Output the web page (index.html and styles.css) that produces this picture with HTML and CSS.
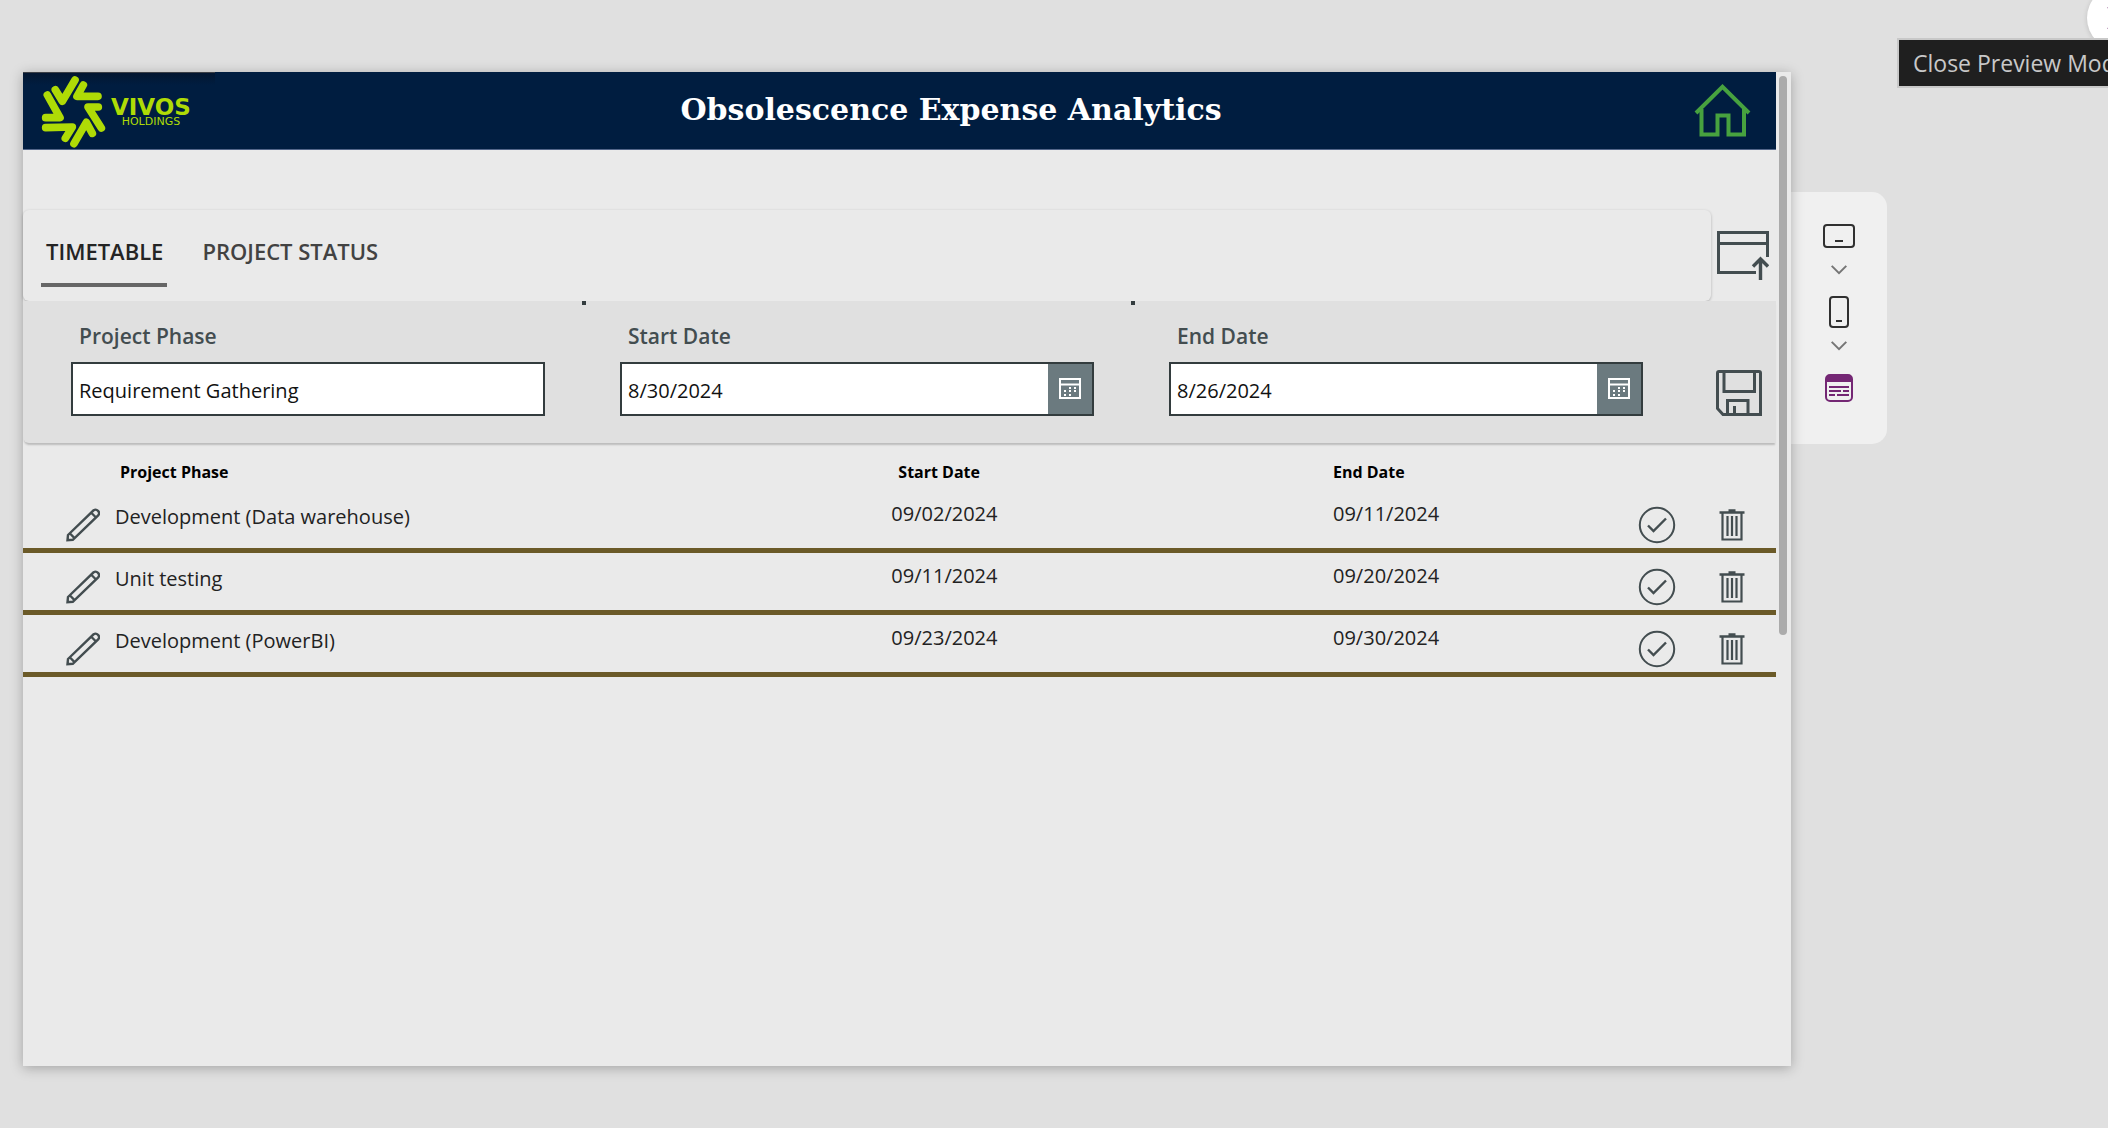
FILE: index.html
```html
<!DOCTYPE html>
<html lang="en">
<head>
<meta charset="utf-8">
<title>Obsolescence Expense Analytics</title>
<link rel="stylesheet" href="styles.css">
</head>
<body>
<svg class="sprite" aria-hidden="true">
  <symbol id="pencil" viewBox="0 0 34 34"><path d="M2 27 L27.600 2.300 A3.500 3.500 0 0 1 32.400 7.200 L6.800 31.800 L1.500 32.200 Z M4.500 26 L8.300 29.800 M25.500 5 L29.500 9" fill="none" stroke="currentColor" stroke-width="2.400"/></symbol>
  <symbol id="check" viewBox="0 0 38 38"><circle cx="19" cy="19" r="17.200" fill="none" stroke="currentColor" stroke-width="2"/><path d="M10 19.500 L15.500 25 L28 12.500" fill="none" stroke="currentColor" stroke-width="2.400"/></symbol>
  <symbol id="trash" viewBox="0 0 26 34"><path d="M.5 4.500 H25.500 M9.500 2.500 H16.500" fill="none" stroke="currentColor" stroke-width="2.600"/><path d="M3.500 5 V31.500 H22.500 V5" fill="none" stroke="currentColor" stroke-width="2.200"/><path d="M8.500 8 V28 M13 8 V28 M17.500 8 V28" stroke="currentColor" stroke-width="2.200"/></symbol>
  <symbol id="calendar" viewBox="0 0 22 22"><path d="M1 1 H21 V20 H1 Z M1 6.500 H21" fill="none" stroke="currentColor" stroke-width="2"/><path d="M10 9h2v2h-2z M15 9h2v2h-2z M5 12h2v2h-2z M10 12h2v2h-2z M15 12h2v2h-2z M5 16h2v2h-2z M10 16h2v2h-2z" fill="currentColor"/></symbol>
  <symbol id="chevron" viewBox="0 0 16 10"><path d="M.7 .9 L8 8.200 L15.300 .9" fill="none" stroke="currentColor" stroke-width="2"/></symbol>
</svg>
<div class="stage">
  <main class="app">
    <div class="screen">
      <header class="banner">
        <div class="logo">
          <svg class="logo-mark" viewBox="90 45 201 225" aria-hidden="true"><g fill="none" stroke="#afdb06" stroke-width="23" stroke-linecap="round" stroke-linejoin="round"><path d="M136 92 L157 127 L195 63"/><path d="M220 78 L201 112 H264"/><path d="M112 108 L150 176 H107"/><path d="M107 206 L187 204 L166 238"/><path d="M192 254 L229 190 L247 223"/><path d="M265 144 H234 L274 207"/></g></svg>
          <span class="logo-text"><b>VIVOS</b><small>HOLDINGS</small></span>
        </div>
        <h1>Obsolescence Expense Analytics</h1>
        <button class="icon-button home" aria-label="Home"><svg width="58" height="54" viewBox="0 0 58 54"><path d="M2 29 L28.500 2.800 L55 29" fill="none" stroke="#47a23f" stroke-width="4"/><path d="M7.500 25 V50.500 H23.500 V31.500 H34.500 V50.500 H50 V25" fill="none" stroke="#47a23f" stroke-width="4"/></svg></button>
      </header>
      <div class="tab-row">
        <nav class="tabs">
          <button class="tab active">TIMETABLE</button>
          <button class="tab">PROJECT STATUS</button>
        </nav>
        <button class="icon-button" aria-label="Open window"><svg width="52" height="50" viewBox="0 0 52 50"><path d="M39 41.500 H1.500 V1.500 H50.500 V26 M1.500 12.500 H50.500" fill="none" stroke="currentColor" stroke-width="3"/><path d="M43.500 49 V28 M36 35.500 L43.500 28 L51 35.500" fill="none" stroke="currentColor" stroke-width="3.400"/></svg></button>
      </div>
      <form class="form">
        <div class="field marked">
          <label for="phase">Project Phase</label>
          <div class="control"><input id="phase" type="text" value="Requirement Gathering"></div>
        </div>
        <div class="field marked">
          <label for="start">Start Date</label>
          <div class="control"><input id="start" type="text" value="8/30/2024"><button type="button" class="pick" aria-label="Pick start date"><svg width="22" height="22"><use href="#calendar"/></svg></button></div>
        </div>
        <div class="field">
          <label for="end">End Date</label>
          <div class="control"><input id="end" type="text" value="8/26/2024"><button type="button" class="pick" aria-label="Pick end date"><svg width="22" height="22"><use href="#calendar"/></svg></button></div>
        </div>
        <button type="button" class="icon-button save" aria-label="Save"><svg width="46" height="46" viewBox="0 0 46 46"><path d="M3 1.500 H43 Q44.500 1.500 44.500 3 V44.500 H7 L1.500 38.500 V3 Q1.500 1.500 3 1.500 Z M8 2 V21.500 H38.500 V2 M11.500 44 V30.500 H32 V44 M18.500 36 V44" fill="none" stroke="currentColor" stroke-width="3"/></svg></button>
      </form>
      <table class="schedule">
        <colgroup><col class="c-edit"><col class="c-name"><col class="c-start"><col class="c-end"><col class="c-done"><col class="c-remove"></colgroup>
        <thead><tr><td></td><th class="indent">Project Phase</th><th class="start">Start Date</th><th>End Date</th><td></td><td></td></tr></thead>
        <tbody>
          <tr><td class="edit"><button class="icon-button" aria-label="Edit"><svg width="34" height="34"><use href="#pencil"/></svg></button></td><td class="name">Development (Data warehouse)</td><td class="start">09/02/2024</td><td>09/11/2024</td><td class="act"><button class="icon-button" aria-label="Mark done"><svg width="38" height="38"><use href="#check"/></svg></button></td><td class="act"><button class="icon-button" aria-label="Delete"><svg width="26" height="34"><use href="#trash"/></svg></button></td></tr>
          <tr><td class="edit"><button class="icon-button" aria-label="Edit"><svg width="34" height="34"><use href="#pencil"/></svg></button></td><td class="name">Unit testing</td><td class="start">09/11/2024</td><td>09/20/2024</td><td class="act"><button class="icon-button" aria-label="Mark done"><svg width="38" height="38"><use href="#check"/></svg></button></td><td class="act"><button class="icon-button" aria-label="Delete"><svg width="26" height="34"><use href="#trash"/></svg></button></td></tr>
          <tr><td class="edit"><button class="icon-button" aria-label="Edit"><svg width="34" height="34"><use href="#pencil"/></svg></button></td><td class="name">Development (PowerBI)</td><td class="start">09/23/2024</td><td>09/30/2024</td><td class="act"><button class="icon-button" aria-label="Mark done"><svg width="38" height="38"><use href="#check"/></svg></button></td><td class="act"><button class="icon-button" aria-label="Delete"><svg width="26" height="34"><use href="#trash"/></svg></button></td></tr>
        </tbody>
      </table>
    </div>
    <div class="scroll-track"><div class="scroll-thumb"></div></div>
  </main>
  <aside class="devices">
    <button class="device" aria-label="Tablet"><svg width="32" height="24" viewBox="0 0 32 24"><rect x="1" y="1" width="30" height="22" rx="3" fill="none" stroke="currentColor" stroke-width="2"/><path d="M12 17 H20" stroke="currentColor" stroke-width="2"/></svg></button>
    <button class="device more" aria-label="Tablet sizes"><svg width="16" height="10"><use href="#chevron"/></svg></button>
    <button class="device phone" aria-label="Phone"><svg width="20" height="32" viewBox="0 0 20 32"><rect x="1" y="1" width="18" height="30" rx="3" fill="none" stroke="currentColor" stroke-width="2"/><path d="M7 25 H13" stroke="currentColor" stroke-width="2"/></svg></button>
    <button class="device more near" aria-label="Phone sizes"><svg width="16" height="10"><use href="#chevron"/></svg></button>
    <button class="device fit" aria-label="Form view"><svg width="28" height="28" viewBox="0 0 28 28"><rect x="1" y="1" width="26" height="26" rx="4" fill="none" stroke="currentColor" stroke-width="2"/><path d="M1 8 V5 Q1 1 5 1 H23 Q27 1 27 5 V8 Z" fill="currentColor"/><path d="M4 13 H24 M4 17 H16 M18 17 H24 M4 21 H10 M12 21 H24" stroke="currentColor" stroke-width="2"/></svg></button>
  </aside>
</div>
<button class="close" aria-label="Close"><svg width="24" height="24" viewBox="0 0 24 24"><path d="M1 1 L23 23 M23 1 L1 23" stroke="currentColor" stroke-width="2"/></svg></button>
<div class="tooltip" role="tooltip">Close Preview Mode</div>
</body>
</html>
```
FILE: styles.css
```css
* { box-sizing: border-box; }

body {
  margin: 0;
  min-height: 100vh;
  display: flex;
  position: relative;
  overflow: hidden;
  background: #e0e0e0;
  color: #222;
  font-family: "Open Sans", "Noto Sans", sans-serif;
  font-size: 20px;
  line-height: 28px;
}

button, input { font: inherit; color: inherit; }
button { border: 0; padding: 0; background: none; cursor: pointer; }
svg { display: block; }
.sprite { position: absolute; width: 0; height: 0; }

.stage {
  flex: 1;
  min-width: 0;
  display: flex;
  align-items: stretch;
  padding: 72px 221px 62px 23px;
}

.app {
  flex: 1;
  min-width: 0;
  display: flex;
  position: relative;
  background: #eaeaea;
  box-shadow: 0 2px 12px rgba(0, 0, 0, .28);
}
.screen { flex: 1; min-width: 0; }

.scroll-track { width: 15px; padding: 4px 4px 0 3px; }
.scroll-thumb {
  height: 56.5%;
  border-radius: 4px;
  background: #ababab;
}

.icon-button { color: #434d50; }

/* Banner */
.banner {
  display: grid;
  grid-template-columns: 192px 1fr 107px;
  align-items: stretch;
  height: 78px;
  background: #001d40;
  border-bottom: 1px solid #53668a;
}
.logo {
  display: flex;
  align-items: center;
  padding: 1px 0 0 17px;
  border-top: 1px solid #3b3f46;
  background: linear-gradient(#031630, #001d40 12px);
}
.logo-mark { width: 67px; height: 75px; flex: none; }
.logo-text {
  display: flex;
  flex-direction: column;
  align-items: center;
  margin-left: 4px;
  color: #afdb06;
  font-family: "DejaVu Sans", sans-serif;
}
.logo-text b { font-size: 23px; line-height: 18px; padding-top: 3px; }
.logo-text small { font-size: 11px; line-height: 12px; }
.banner h1 {
  margin: 0;
  text-align: center;
  padding-left: 18px;
  color: #fff;
  font: bold 30px/76px Georgia, "DejaVu Serif", serif;
}
.home { justify-self: center; padding-left: 1px; }

/* Tabs */
.tab-row {
  display: flex;
  align-items: center;
  padding: 60px 7px 0 0;
}
.tabs {
  flex: 1;
  display: flex;
  gap: 30px;
  height: 91px;
  margin-right: 6px;
  padding: 0 18px;
  border-radius: 6px;
  box-shadow: 0 1px 3px rgba(0, 0, 0, .25);
}
.tab {
  height: 77px;
  padding: 8px 4px 0 5px;
  border-bottom: 4px solid transparent;
  color: #424242;
  font-size: 22px;
  font-weight: 600;
}
.tab.active { color: #242424; border-bottom-color: #666; }

/* Form */
.form {
  display: grid;
  grid-template-columns: repeat(3, 1fr) 92px;
  height: 142px;
  padding-left: 14px;
  position: relative;
  background: #e0e0e0;
  border-radius: 0 0 0 6px;
  box-shadow: 0 3px 2px -1px rgba(0, 0, 0, .2);
}
.field { position: relative; padding: 21px 41px 0 34px; }
.marked::after {
  content: "";
  position: absolute;
  top: 0;
  right: 0;
  width: 4px;
  height: 4px;
  background: #333c3e;
}
.field label {
  display: block;
  padding: 0 8px;
  height: 40px;
  color: #434d50;
  font-size: 21px;
  font-weight: 600;
}
.control {
  display: flex;
  height: 54px;
  border: 2px solid #333c3e;
  background: #fff;
}
.control input {
  flex: 1;
  min-width: 0;
  border: 0;
  padding: 3px 6px 0;
  background: none;
  color: #111;
  outline: none;
}
.pick {
  display: flex;
  align-items: center;
  justify-content: center;
  width: 44px;
  background: #6b7a7f;
  color: #fff;
}
.save { justify-self: start; align-self: start; padding: 69px 0 0 32px; }

/* Schedule */
.schedule {
  width: 100%;
  table-layout: fixed;
  border-collapse: separate;
  border-spacing: 0;
}
.c-edit { width: 92px; }
.c-name { width: 44%; }
.c-end { width: 287px; }
.c-done { width: 73px; }
.c-remove { width: 83px; }
.schedule th, .schedule td { padding: 0; text-align: left; vertical-align: top; }
.schedule thead tr { height: 48px; }
.schedule th {
  padding-top: 15px;
  color: #000;
  font-size: 16px;
  font-weight: 700;
}
.schedule th.indent { padding-left: 5px; }
.schedule th.start { padding-left: 12px; }
.schedule tbody tr { height: 62px; }
.schedule tbody td { padding-top: 9px; border-bottom: 5px solid #6b5a28; }
.schedule tbody td.start { padding-left: 5px; }
.schedule tbody td.name { padding-top: 12px; }
.schedule tbody td.edit { padding: 17px 0 0 43px; }
.schedule tbody td.act { padding-top: 15px; }
.schedule .icon-button { display: block; }
.schedule .act .icon-button { margin: 0 auto; }
.schedule tbody td.act:last-child { padding: 17px 6px 0 0; }

/* Device switcher */
.devices {
  width: 96px;
  margin-top: 120px;
  padding-top: 32px;
  height: 252px;
  display: flex;
  flex-direction: column;
  align-items: center;
  border-radius: 0 15px 15px 0;
  background: #f0f0f0;
}
.device { color: #303030; }
.device.more { margin-top: 17px; color: #757575; }
.device.phone { margin-top: 21px; }
.device.near { margin-top: 13px; }
.device.fit { margin-top: 23px; color: #742774; }

/* Preview close control and its tooltip sit over the page */
.close {
  position: absolute;
  top: -14px;
  right: -43px;
  width: 64px;
  height: 64px;
  display: flex;
  align-items: center;
  justify-content: center;
  border-radius: 50%;
  background: #fff;
  color: #742774;
  box-shadow: 0 1px 5px rgba(0, 0, 0, .15);
}
.tooltip {
  position: absolute;
  top: 38px;
  right: 0;
  width: 211px;
  height: 50px;
  padding: 9px 0 0 14px;
  overflow: hidden;
  white-space: nowrap;
  border: 2px solid #c8c8c8;
  border-right: 0;
  background: #1f1f1f;
  color: #c8c8c8;
  font-size: 23px;
}
```
